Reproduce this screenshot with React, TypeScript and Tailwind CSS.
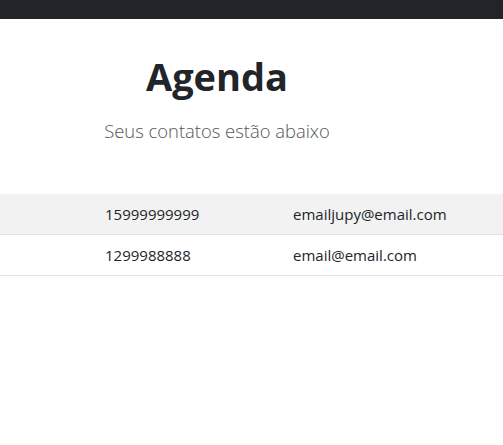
import React from 'react';

const contatos = [
  { nome: 'Jupy Silva', telefone: '15999999999', email: 'emailjupy@email.com' },
  { nome: 'Contato', telefone: '1299988888', email: 'email@email.com' },
];

export default function App() {
  return (
    <div className="min-h-screen bg-white text-[#212529] font-['Open_Sans',sans-serif] overflow-hidden">
      {/* Navbar */}
      <nav className="h-[19px] bg-[#212529]" />

      <div className="w-[620px] ml-[-93px]">
        {/* Header */}
        <div className="text-center pt-[33px]">
          <h1 className="text-[38px] leading-[48px] font-bold">Agenda</h1>
          <p className="mt-[19px] text-[18.4px] leading-[24px] font-light text-[#555]">
            Seus contatos estão abaixo
          </p>
        </div>

        {/* Table */}
        <div className="mt-[51px] text-[15px]">
          {contatos.map((c, i) => (
            <div
              key={i}
              className={`grid grid-cols-[190px_188px_1fr] border-b border-[#dee2e6] ${i % 2 === 0 ? 'bg-[#f2f2f2]' : 'bg-white'}`}
            >
              <div className="px-2 py-2 leading-[24px]">{c.nome}</div>
              <div className="px-2 py-2 leading-[24px]">{c.telefone}</div>
              <div className="px-2 py-2 leading-[24px]">{c.email}</div>
            </div>
          ))}
        </div>
      </div>
    </div>
  );
}
